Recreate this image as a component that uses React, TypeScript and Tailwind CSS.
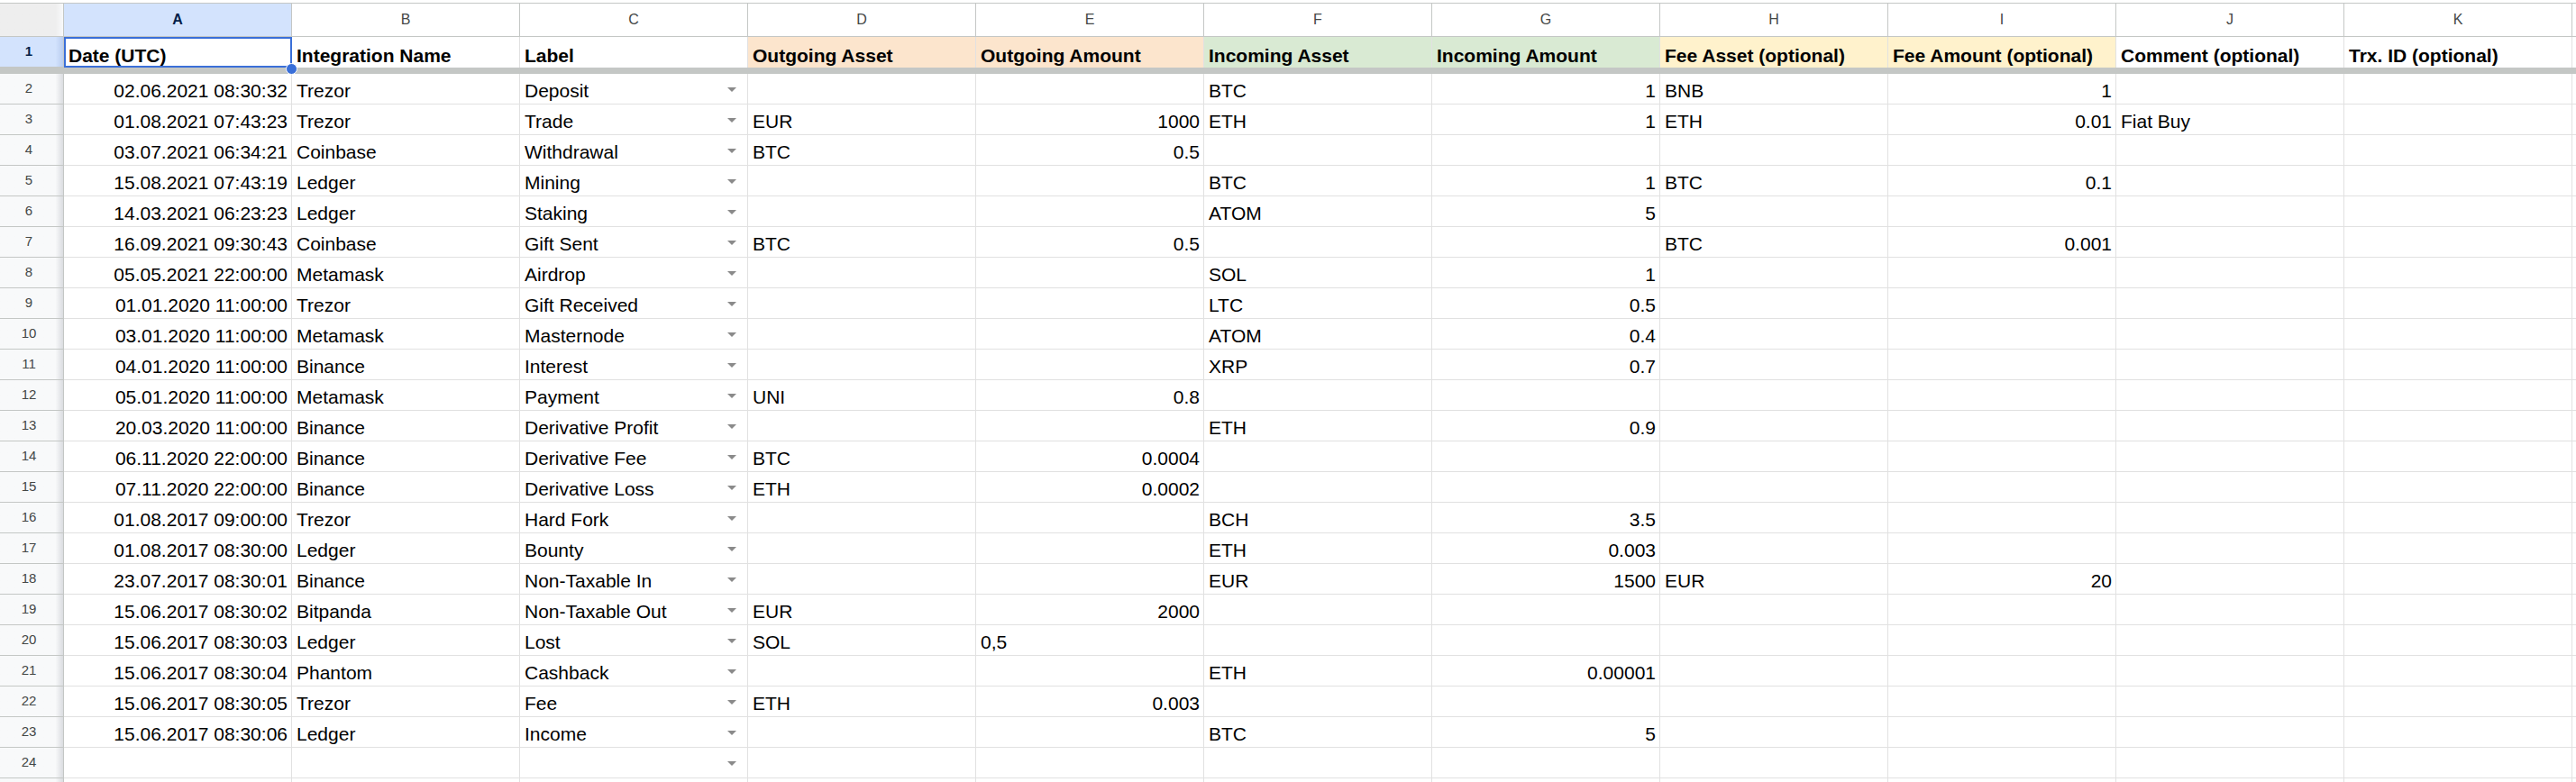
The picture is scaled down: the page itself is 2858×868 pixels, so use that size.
const letters = ["A", "B", "C", "D", "E", "F", "G", "H", "I", "J", "K"];

const headers = [
  "Date (UTC)",
  "Integration Name",
  "Label",
  "Outgoing Asset",
  "Outgoing Amount",
  "Incoming Asset",
  "Incoming Amount",
  "Fee Asset (optional)",
  "Fee Amount (optional)",
  "Comment (optional)",
  "Trx. ID (optional)",
];

const headerBg = [
  "bg-white",
  "bg-white",
  "bg-white",
  "bg-[#fce5cd]",
  "bg-[#fce5cd]",
  "bg-[#d9ead3]",
  "bg-[#d9ead3]",
  "bg-[#fff2cc]",
  "bg-[#fff2cc]",
  "bg-white",
  "bg-white",
];

// date, integration, label, out asset, out amount, in asset, in amount, fee asset, fee amount, comment, trx id
const rows: string[][] = [
  ["02.06.2021 08:30:32", "Trezor", "Deposit", "", "", "BTC", "1", "BNB", "1", "", ""],
  ["01.08.2021 07:43:23", "Trezor", "Trade", "EUR", "1000", "ETH", "1", "ETH", "0.01", "Fiat Buy", ""],
  ["03.07.2021 06:34:21", "Coinbase", "Withdrawal", "BTC", "0.5", "", "", "", "", "", ""],
  ["15.08.2021 07:43:19", "Ledger", "Mining", "", "", "BTC", "1", "BTC", "0.1", "", ""],
  ["14.03.2021 06:23:23", "Ledger", "Staking", "", "", "ATOM", "5", "", "", "", ""],
  ["16.09.2021 09:30:43", "Coinbase", "Gift Sent", "BTC", "0.5", "", "", "BTC", "0.001", "", ""],
  ["05.05.2021 22:00:00", "Metamask", "Airdrop", "", "", "SOL", "1", "", "", "", ""],
  ["01.01.2020 11:00:00", "Trezor", "Gift Received", "", "", "LTC", "0.5", "", "", "", ""],
  ["03.01.2020 11:00:00", "Metamask", "Masternode", "", "", "ATOM", "0.4", "", "", "", ""],
  ["04.01.2020 11:00:00", "Binance", "Interest", "", "", "XRP", "0.7", "", "", "", ""],
  ["05.01.2020 11:00:00", "Metamask", "Payment", "UNI", "0.8", "", "", "", "", "", ""],
  ["20.03.2020 11:00:00", "Binance", "Derivative Profit", "", "", "ETH", "0.9", "", "", "", ""],
  ["06.11.2020 22:00:00", "Binance", "Derivative Fee", "BTC", "0.0004", "", "", "", "", "", ""],
  ["07.11.2020 22:00:00", "Binance", "Derivative Loss", "ETH", "0.0002", "", "", "", "", "", ""],
  ["01.08.2017 09:00:00", "Trezor", "Hard Fork", "", "", "BCH", "3.5", "", "", "", ""],
  ["01.08.2017 08:30:00", "Ledger", "Bounty", "", "", "ETH", "0.003", "", "", "", ""],
  ["23.07.2017 08:30:01", "Binance", "Non-Taxable In", "", "", "EUR", "1500", "EUR", "20", "", ""],
  ["15.06.2017 08:30:02", "Bitpanda", "Non-Taxable Out", "EUR", "2000", "", "", "", "", "", ""],
  ["15.06.2017 08:30:03", "Ledger", "Lost", "SOL", "0,5", "", "", "", "", "", ""],
  ["15.06.2017 08:30:04", "Phantom", "Cashback", "", "", "ETH", "0.00001", "", "", "", ""],
  ["15.06.2017 08:30:05", "Trezor", "Fee", "ETH", "0.003", "", "", "", "", "", ""],
  ["15.06.2017 08:30:06", "Ledger", "Income", "", "", "BTC", "5", "", "", "", ""],
  ["", "", "", "", "", "", "", "", "", "", ""],
];

const isRight = (col: number, v: string) =>
  col === 0 || ((col === 4 || col === 6 || col === 8) && /^[0-9.]+$/.test(v));

const DropArrow = () => (
  <span className="mr-[12px] mb-[9px] h-0 w-0 shrink-0 border-x-[5px] border-t-[5px] border-x-transparent border-t-[#8a8a8a]" />
);

const RowHead = ({ label, active }: { label: string; active?: boolean }) => (
  <div
    className={`flex w-[71px] shrink-0 items-center justify-center border-b border-r border-[#c4c7c5] bg-linear-to-r from-[88%] pr-[6px] text-[15px] ${
      active
        ? "from-[#d3e3fd] to-[#b9cdf0] font-bold text-[#041e49]"
        : "from-[#f8f9fa] to-[#dadce0] text-[#444746]"
    }`}
  >
    {label}
  </div>
);

export default function App() {
  return (
    <div className="h-[868px] w-[2858px] overflow-hidden bg-white font-['Liberation_Sans',Arial,sans-serif] text-black">
      <div className="h-[3px]" />

      {/* column letters */}
      <div className="flex h-[38px] border-t border-[#c4c7c5]">
        <div className="w-[71px] shrink-0 border-b border-r border-[#c4c7c5] bg-linear-to-r from-[#eeeeee] from-[88%] to-[#f8f9fa]" />
        {letters.map((l, i) => (
          <div
            key={l}
            className={`flex w-[253px] shrink-0 items-center justify-center border-b border-r border-[#c4c7c5] text-[16px] ${
              i === 0 ? "bg-[#d3e3fd] font-bold text-[#041e49]" : "bg-white text-[#444746]"
            }`}
          >
            {l}
          </div>
        ))}
        <div className="flex-1 border-b border-[#c4c7c5]" />
      </div>

      {/* header row */}
      <div className="flex h-[34px]">
        <RowHead label="1" active />
        {headers.map((h, i) => (
          <div
            key={h}
            className={`relative flex w-[253px] shrink-0 items-end border-r border-[#e1e1e1] pb-[3px] pl-[5px] text-[21px] leading-[21px] font-bold whitespace-nowrap ${headerBg[i]}`}
          >
            {h}
            {i === 0 && (
              <>
                <div className="absolute inset-y-0 left-0 -right-px border-2 border-[#3a6fd8]" />
                <div className="absolute -right-[7px] -bottom-[8px] z-10 h-[13px] w-[13px] rounded-full border border-white bg-[#3a6fd8]" />
              </>
            )}
          </div>
        ))}
        <div className="flex-1" />
      </div>

      {/* frozen row divider */}
      <div className="h-[7px] bg-[#c4c7c5]" />

      {rows.map((r, ri) => (
        <div key={ri} className="flex h-[34px]">
          <RowHead label={String(ri + 2)} />
          {r.map((v, ci) => (
            <div
              key={ci}
              className={`flex w-[253px] shrink-0 items-end border-b border-r border-[#e1e1e1] pb-[4px] text-[21px] leading-[21px] whitespace-nowrap ${
                isRight(ci, v) ? "justify-end pr-[4px]" : "justify-between pl-[5px]"
              }`}
            >
              <span>{v}</span>
              {ci === 2 && <DropArrow />}
            </div>
          ))}
          <div className="flex-1 border-b border-[#e1e1e1]" />
        </div>
      ))}

      {/* partly visible next row */}
      <div className="flex h-[34px]">
        <div className="w-[71px] shrink-0 border-r border-[#c4c7c5] bg-linear-to-r from-[#f8f9fa] from-[88%] to-[#dadce0]" />
        {letters.map((l) => (
          <div key={l} className="w-[253px] shrink-0 border-r border-[#e1e1e1]" />
        ))}
      </div>
    </div>
  );
}
